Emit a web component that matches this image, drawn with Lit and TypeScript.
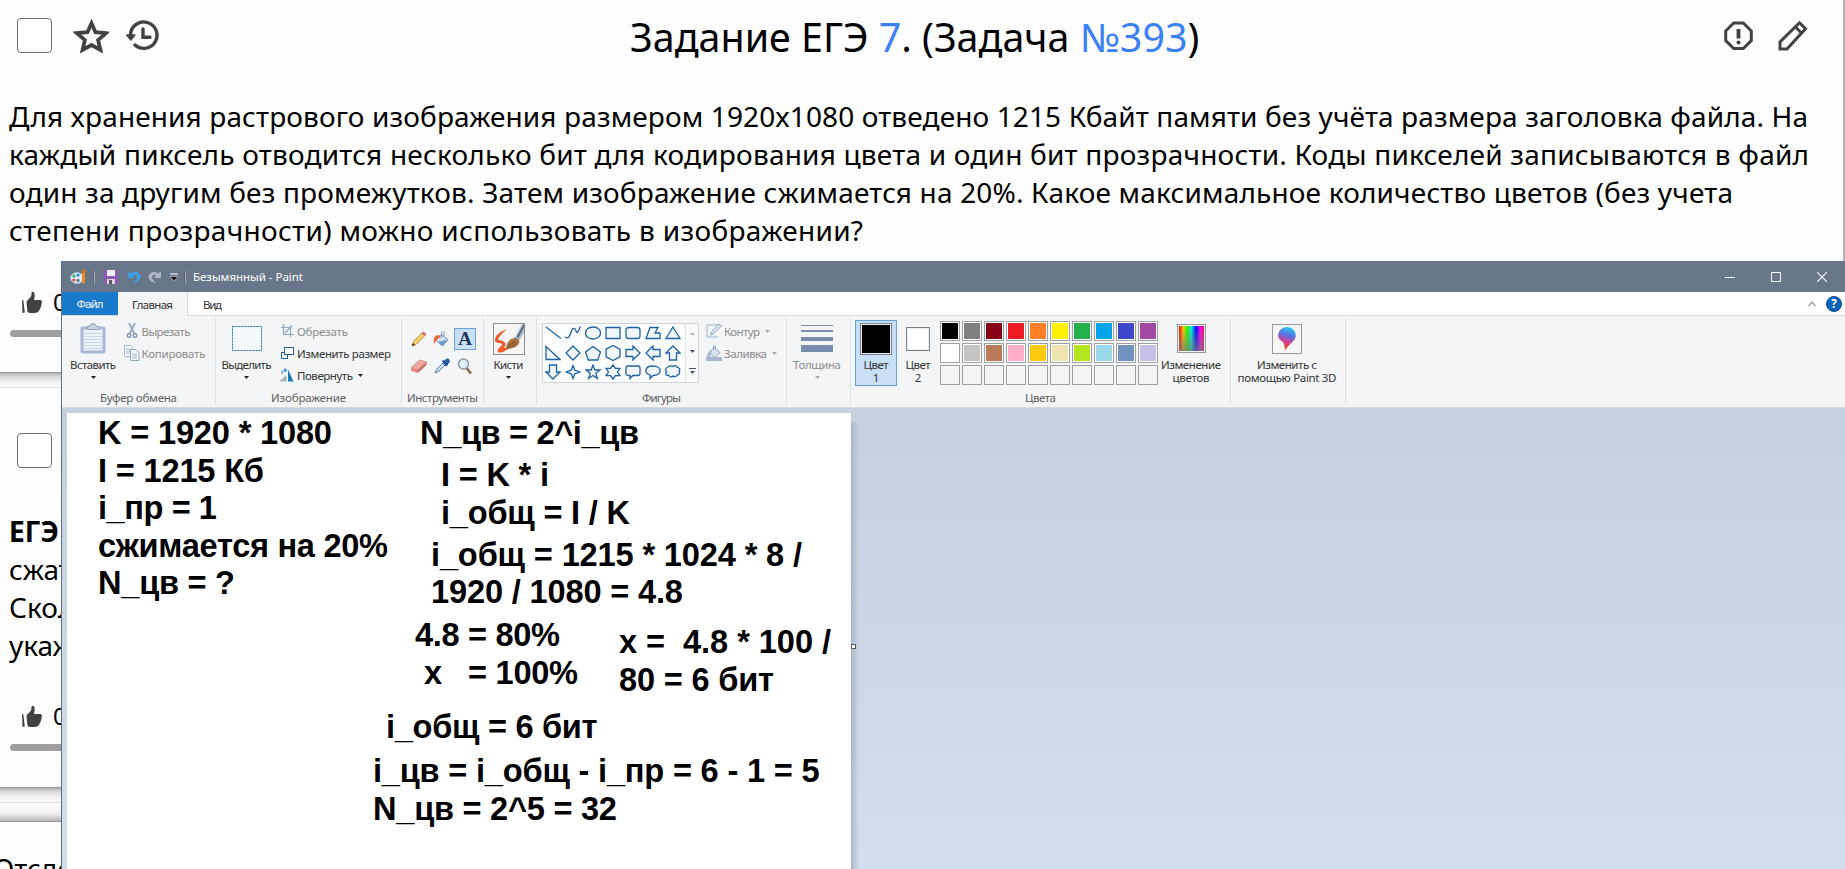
import { LitElement, html, svg, css, nothing, TemplateResult } from "lit";
import { customElement, property } from "lit/decorators.js";
import { classMap } from "lit/directives/class-map.js";
import { styleMap } from "lit/directives/style-map.js";

/** A run of text whose tracking is adjusted so that it spans a given width. */
@customElement("fit-text")
class FitText extends LitElement {
  @property() text = "";
  @property({ type: Number }) w = 0;
  static styles = css`
    :host { display: inline-block; white-space: pre; }
  `;
  updated() {
    this.style.letterSpacing = "0px";
    const natural = this.getBoundingClientRect().width;
    const n = Math.max(1, this.text.length - 1);
    if (this.w) {
      const s = (this.w - natural) / n;
      this.style.letterSpacing = `${s}px`;
      this.style.marginRight = `${-s}px`;
    }
  }
  render() {
    return html`${this.text}`;
  }
}

const fit = (text: string, w: number) => html`<fit-text .text=${text} .w=${w}></fit-text>`;
const icon = (w: number, h: number, body: TemplateResult | TemplateResult[]) =>
  html`<svg width=${w} height=${h} viewBox="0 0 ${w} ${h}" fill="none">${body}</svg>`;
const arrow = (color = "#222") => icon(5, 3, svg`<path d="M0 0h5L2.500 3z" fill=${color}/>`);

const starIcon = icon(36, 34, svg`<path d="M18.500 4.200l4 9 10.600 .9-8 7 2.300 9.800L18.500 26l-8.900 4.900 2.300-9.800-8-7 10.600-.9z" stroke="#424242" stroke-width="3.800"/>`);
const historyIcon = icon(34, 32, svg`
  <path d="M4.600 15.500A13.200 13.200 0 1 1 9 25" stroke="#424242" stroke-width="3.400" stroke-linecap="round"/>
  <path d="M.8 15h8l-4 5z" fill="#424242" stroke="#424242" stroke-width="1.500" stroke-linejoin="round"/>
  <path d="M17 9v8.300h7" stroke="#424242" stroke-width="3.400" stroke-linecap="round"/>`);
const reportIcon = icon(30, 30, svg`
  <path d="M9.700 2h9.600l8 8v9.600l-8 8H9.700l-8-8V10z" stroke="#424242" stroke-width="3"/>
  <path d="M14.500 8v9.500" stroke="#424242" stroke-width="3.800"/><circle cx="14.500" cy="21.500" r="2" fill="#424242"/>`);
const pencilIcon = icon(30, 30, svg`
  <path d="M2 28v-7L21.500 1.800l6 6L9 28z" stroke="#424242" stroke-width="3"/>
  <path d="M17.500 6l6 6" stroke="#424242" stroke-width="2.800"/>`);
const thumbIcon = icon(22, 23, svg`
  <path d="M1 9.500l1.200-.8 1.600 12.800-2.300.5z" fill="#424242"/>
  <path d="M5.500 11c0-1.200 4-4.200 4.800-6.200.4-1.500-.3-3.800 1.400-4 2.400 0 2.300 4 1.300 8.200h6c1.600 0 2.100 1 1.900 2.500-.4 3.500-1.800 6.800-3.400 9-1 1-2 1.400-4 1.400H9c-1.600 0-2.500-.8-2.700-2.200z" fill="#424242"/>`);

const paintIcon = icon(17, 17, svg`
  <ellipse cx="7" cy="10" rx="6.500" ry="5.500" fill="#dcebf5" stroke="#9fc3dc" stroke-width=".8"/>
  <circle cx="4" cy="8" r="1.600" fill="#3aa95a"/><circle cx="8" cy="7" r="1.600" fill="#3f83d6"/>
  <circle cx="3.800" cy="12" r="1.600" fill="#d84b3a"/><circle cx="8" cy="12.500" r="1.700" fill="#68788c"/>
  <path d="M12 5l1.500-4L15 5v10.500h-3z" fill="#ef8b27"/><path d="M11.500 1.500h4V5h-4z" fill="#c4762c"/>`);
const saveIcon = icon(14, 14, svg`
  <path d="M0 0h14v14H2l-2-2z" fill="#8c5bb0"/><path d="M3 0h8v6H3z" fill="#f3eff7"/><path d="M3 9h8v5H3z" fill="#d9d4df"/><path d="M5 10h3v4H5z" fill="#5b5560"/>`);
const undoIcon = (c: string) => icon(14, 14, svg`
  <path d="M1 1v7h7.200L5.700 5.600C8 4.300 10 5.200 9.900 7.500 9.800 9.500 8.300 11 5.500 13.200 10.500 12.500 13.600 10 13.500 6.700 13.300 2.300 8 .3 3.600 3.400z" fill=${c}/>`);

const clipboardIcon = icon(26, 31, svg`
  <rect x=".5" y="3.500" width="25" height="27" rx="2" fill="#a9b8d2"/><rect x="3.500" y="6.500" width="19" height="21" fill="#edf3fa"/>
  <path d="M3.500 10.500h19M3.500 13.500h19M3.500 16.500h19M3.500 19.500h19M3.500 22.500h19M3.500 25.500h19" stroke="#c5d6ea"/>
  <path d="M7 6.500V4l3-1c0-3 6-3 6 0l3 1v2.500z" fill="#c9d2df" stroke="#909fb6"/>`);
const cutIcon = icon(16, 16, svg`
  <path d="M5 0l5.500 11M11 0L5.500 11" stroke="#9cadc7" stroke-width="2"/>
  <circle cx="5" cy="12.500" r="1.800" stroke="#8498b8" stroke-width="1.400"/><circle cx="11" cy="12.500" r="1.800" stroke="#8498b8" stroke-width="1.400"/>`);
const copyIcon = icon(16, 16, svg`
  <path d="M.5.500h6l3 3v8h-9z" fill="#f3f7fc" stroke="#a7b7d0"/><path d="M2 4h4M2 6h4M2 8h4" stroke="#a7b7d0"/>
  <path d="M6.500 4.500h5.500l3 3v8H6.500z" fill="#f3f7fc" stroke="#93a6c4"/><path d="M8 9h5M8 11h5M8 13h5" stroke="#a7b7d0"/>`);
const selectIcon = icon(30, 25, svg`<rect x=".5" y=".5" width="29" height="24" fill="#f4f9fd" stroke="#1c6cb0" stroke-dasharray="2 1"/>`);
const cropIcon = icon(14, 14, svg`<path d="M3.500 0v10.500H14M1 3.500h9.500V13M5 9l7-7.500" stroke="#8fa3c3" stroke-width="1.200"/>`);
const resizeIcon = icon(14, 14, svg`
  <rect x="1.500" y="6.500" width="6" height="6" fill="#fff" stroke="#1f62a3"/><rect x="4.500" y="1.500" width="9" height="7" fill="#fff" stroke="#1f62a3"/>`);
const rotateIcon = icon(16, 14, svg`
  <path d="M0 13.500L7.500 7v6.500z" fill="#a9b3be"/><path d="M9 1.500l5.500 12H9z" fill="#1f78b8"/><path d="M3 6c0-3 1.500-4 4-4M5.500.500L7.500 2l-2 2" stroke="#3a90d8" stroke-width="1.200"/>`);

const toolPencil = icon(16, 16, svg`<path d="M1 15l1.500-4.500L11.500 1.500 14.500 4 5 13.500z" fill="#f3d565" stroke="#a8752c" stroke-width=".8"/><path d="M10.500 2.500l2-2 3 2.500-2 2z" fill="#d9757a"/><path d="M1 15l1-3 2 2z" fill="#333"/>`);
const toolBucket = icon(18, 16, svg`<path d="M8 3.500l7 5-5.500 6.500-6.500-6z" fill="#d7e5f2" stroke="#7693b4"/><path d="M9 10l6-1.500-5.500 6.500-5-4z" fill="#6f9cc8"/><path d="M8.500 7V2c0-2 2.500-2 2.500 0v3" stroke="#8a99a8"/><path d="M6 4C2 4 0 7 1 13l2.500-4L7.500 6z" fill="#e8663c"/>`);
const toolEraser = icon(18, 14, svg`<path d="M1 9l8.500-8 7 2-8.500 8z" fill="#f0a9a2" stroke="#c97d77" stroke-width=".8"/><path d="M1 9l7 2v3l-6.500-2z" fill="#e3857f"/><path d="M8 11l8.500-8v3L8 14z" fill="#c96d68"/>`);
const toolPicker = icon(16, 16, svg`<path d="M8.500 2.500l5 5M9.500 5.500l3-3.500c1-1.200 3 .5 2 2l-3 3z" stroke="#1f5796" stroke-width="2" fill="#2f72b8"/><path d="M9 5L2.500 11.500 1 15l3.500-1.500L11 7z" fill="#cfe2f2" stroke="#4d7296" stroke-width=".9"/>`);
const toolZoom = icon(16, 17, svg`<path d="M9.500 10l4.500 5.500" stroke="#8d6a4c" stroke-width="2.600"/><circle cx="6.500" cy="6" r="5" fill="#e0effa" stroke="#8e9aa6" stroke-width="1.500"/>`);
const brushIcon = icon(32, 32, svg`
  <rect x=".5" y=".5" width="31" height="31" fill="#f7f6f5" stroke="#8f8f8f"/>
  <path d="M14 6.500C7 8 1.500 13 2 18c1.500 2.500 5 1.500 7 3 1 1.500-4 4-4.500 6.500 0 2.500 3.500 2.500 5.500 1.500l6-3.500-5-1c2-2 2-5-1-6.500-2-1-4.500-.5-5-1.500 1-3 4-6.500 9-10z" fill="#f0592a"/>
  <path d="M21 15L28.500 1H31v8.500L26 18z" fill="#aebdcd"/><path d="M24.500 14.500L31 2" stroke="#596b80" stroke-width="1.800"/><path d="M22 14L28.500 1.500" stroke="#e6edf3"/>
  <path d="M13 26c0-7 5-11.500 10-11 4 1.500 4 5 2 7-3 3-7 4-12 4z" fill="#a8733d"/><path d="M15 24l7-6M18 24l5-4" stroke="#6b4523"/>`);

// Shape gallery, each drawn in a 16×16 box.
const SHAPES: string[] = [
  "M1 2l15 11.500", "M0 12c4 3 5-2 6.500-6s4-3 4.500 0 2.500 1 4.500-4.500", "M8 2c10 0 10 12 0 12S-2 2 8 2z",
  "M1 2.500h14v11H1z", "M3.500 2.500h9a2.500 2.500 0 0 1 2.500 2.500v6a2.500 2.500 0 0 1-2.500 2.500h-9A2.500 2.500 0 0 1 1 11V5a2.500 2.500 0 0 1 2.500-2.500z",
  "M5 2.500h8l-3 5.500h5v5.500H1z", "M8 2l7 11.500H1z",
  "M1 1.500l14 13H1z", "M8 1l7 7-7 7-7-7z", "M8 1.500l7.500 5.500-2.800 8H3.300L.5 7z", "M8 .5l7 3.700v7.600l-7 3.700-7-3.700V4.200z",
  "M1 4.500h7V1l7 7-7 7v-3.500H1z", "M15 4.500H8V1L1 8l7 7v-3.500h7z", "M8 1l7 7h-3.500v7h-7V8H1z",
  "M8 15l7-7h-3.500V1h-7v7H1z", "M8 1.500l1.800 4.700L15 8l-5.200 1.800L8 14.500l-1.800-4.700L1 8l5.200-1.800z",
  "M8 1l1.800 5h5.200l-4.200 3.300 1.600 5.200L8 11.500l-4.400 3 1.600-5.200L1 6h5.200z",
  "M8 .8l2.300 3.600H15L12.500 8l2.500 3.600h-4.700L8 15.200l-2.300-3.600H1L3.500 8 1 4.400h4.700z",
  "M3 2h10a2 2 0 0 1 2 2v5.500a2 2 0 0 1-2 2H8l-3 3v-3H3a2 2 0 0 1-2-2V4a2 2 0 0 1 2-2z",
  "M8 2c9.500 0 9.500 9.500 0 9.500L5 14.500l.2-3.400C-1 9.500-1 2 8 2z",
  "M4 2.500c2-1.500 3 0 4 0 1.500-1.500 3.500-1 4 .8 2.500 0 3.500 2 2.200 3.700 1 2-.2 4-2 4-1 2-3 2-4 1-1.500 1.500-4 1-4.400-.7C1 12 0 9.500 1.500 8 0 6 .5 3.500 4 2.500z",
];
const shapeIcon = (d: string) => icon(16, 16, svg`<path d=${d} fill="#f0f7fb" stroke="#1f62a3" stroke-width="1.300"/>`);
const outlineIcon = icon(16, 16, svg`<path d="M12 2H1v12h11" stroke="#9fb0cc"/><path d="M4.500 12L6 8.500 13 1l2.500 2L8 10.500z" fill="#dbe3ee" stroke="#8fa3c3"/>`);
const fillIcon = icon(16, 16, svg`<path d="M0 12h16v4H0z" fill="#a9b8d2"/><path d="M8 2.500l6 5-5 5-6-5z" fill="#dbe3ee" stroke="#8fa3c3"/><path d="M1 12c0-4 2-6 5-7l-2 7z" fill="#a9b8d2"/><path d="M7.500 5V1.500c0-1.500 2-1.500 2 0V4" stroke="#8fa3c3"/>`);
const widthIcon = icon(32, 28, svg`<path d="M0 0h32v1H0zM0 5h32v2H0zM0 12h32v4H0zM0 20h32v7H0z" fill="#7a8cb0"/>`);
const spectrumIcon = html`<span class="spectrum"><i></i></span>`;
const balloonIcon = html`<span class="framed"><svg width="20" height="26" viewBox="0 0 20 26">
  <defs><linearGradient id="b" x1=".6" y1="0" x2=".35" y2="1">
    <stop offset="0" stop-color="#25c9f2"/><stop offset=".35" stop-color="#5b6fe0"/><stop offset=".6" stop-color="#d0449a"/><stop offset=".82" stop-color="#e8403c"/><stop offset="1" stop-color="#fbb32b"/>
  </linearGradient></defs>
  <path d="M10 1c5 0 8.800 3.700 8.800 8.500 0 6-6.800 7.500-10.800 15.500-.8-3 .2-6-1.800-8.500C4 14.500 1.200 13 1.200 9.500 1.200 4.700 5 1 10 1z" fill="url(#b)"/></svg></span>`;

const PALETTE: string[] = [
  "#000000", "#7f7f7f", "#880015", "#ed1c24", "#ff7f27", "#fff200", "#22b14c", "#00a2e8", "#3f48cc", "#a349a4",
  "#ffffff", "#c3c3c3", "#b97a57", "#ffaec9", "#ffc90e", "#efe4b0", "#b5e61d", "#99d9ea", "#7092be", "#c8bfe7",
  ...Array(10).fill(""),
];

interface Note { x: number; y: number; lines: [string, number, number?][]; }
/** Text typed on the canvas: baseline of the first line, then [text, width, indent]. */
const NOTES: Note[] = [
  { x: 31, y: 31, lines: [["K = 1920 * 1080", 234], ["I = 1215 Кб", 166], ["i_пр = 1", 119], ["сжимается на 20%", 290], ["N_цв = ?", 137]] },
  { x: 353, y: 30.500, lines: [["N_цв = 2^i_цв", 219]] },
  { x: 374, y: 73, lines: [["I = K * i", 108], ["i_общ = I / K", 189]] },
  { x: 364, y: 152.500, lines: [["i_общ = 1215 * 1024 * 8 /", 371], ["1920 / 1080 = 4.8", 252]] },
  { x: 348, y: 233, lines: [["4.8 = 80%", 145], ["x   = 100%", 154, 9]] },
  { x: 552, y: 240, lines: [["x =  4.8 * 100 /", 212], ["80 = 6 бит", 155]] },
  { x: 319, y: 325, lines: [["i_общ = 6 бит", 211.500]] },
  { x: 306, y: 369, lines: [["i_цв = i_общ - i_пр = 6 - 1 = 5", 446.500], ["N_цв = 2^5 = 32", 244]] },
];

@customElement("paint-window")
class PaintWindow extends LitElement {
  static styles = css`
    * { box-sizing: border-box; }
    :host { display: flex; flex-direction: column; background: #c6d0e1; border-left: 1px solid #5f6d80;
      font: 11.5px/13px "Noto Sans", "Open Sans", sans-serif; color: #333; overflow: hidden; }
    svg { display: block; flex: none; }
    .title { display: flex; align-items: center; height: 31px; flex: none; background: #687689; color: #fff; padding-left: 8px; }
    .title .sep { width: 2px; height: 12px; background: #566274; border-right: 1px solid #a5b0bd; }
    .paint { margin-right: 6px; } .save { margin: 0 9px 0 10px; } .redo { transform: scaleX(-1); margin: 0 8px 0 7px; }
    .drop { margin-right: 6px; } .name { margin-left: 7px; }
    .title .save { margin-left: 9px; }
    .controls { margin-left: auto; display: flex; gap: 36px; padding-right: 18px; }
    .tabs { display: flex; height: 24px; flex: none; background: #fff; border-bottom: 1px solid #dadbdc; }
    .tab { height: 24px; display: flex; align-items: center; justify-content: center; padding-bottom: 0; }
    .tab.file { width: 56px; height: 23px; background: #1979ca; color: #fff; }
    .tab.main { width: 70px; background: #f4f5f7; border: 1px solid #dadbdc; border-width: 0 1px 0 0; }
    .tab.view { width: 49px; }
    .help { margin-left: auto; display: flex; align-items: center; gap: 10px; padding-right: 3px; }
    .q { width: 16px; height: 16px; border-radius: 50%; background: #0b63bd; border: 1px solid #084c92; color: #fff; font-weight: 700; text-align: center; line-height: 14px; }
    .ribbon { display: flex; height: 92px; flex: none; background: #f4f5f7; border-bottom: 1px solid #d5d8dc; padding: 2px 0 3px; }
    .group { display: flex; flex-direction: column; border-right: 1px solid #dfe0e3; padding-top: 2px; }
    .body { display: flex; height: 71px; align-items: flex-start; }
    .label { text-align: center; color: #606060; height: 13px; }
    .big { display: flex; flex-direction: column; align-items: center; flex: none; }
    .big .pic { height: 38px; display: flex; align-items: center; padding-bottom: 1px; }
    .big .second { height: 13px; display: flex; align-items: center; }
    .off { color: #8c8c8c; }
    .rows { display: flex; flex-direction: column; }
    .row { display: flex; height: 22px; align-items: center; }
    .row .ic { width: 20px; display: flex; justify-content: center; flex: none; }
    .row .ar { margin-left: 5px; }
    .clip { margin-left: 3.5px; width: 55px; }
    .clip + .rows { margin-left: 1px; }
    .clipboard { width: 154px; } .image { width: 186px; } .tools { width: 82px; } .brushes { width: 53px; }
    .shapes { width: 250px; } .thick { width: 64px; } .colors { width: 380px; } .p3d { width: 115px; }
    .image .big { width: 61px; } .brushes .big, .thick .big { width: 100%; } .brushes .big { padding-right: 3px; } .thick .big { padding-right: 3px; }
    .toolgrid { display: grid; grid-template-columns: repeat(3, 22px); grid-auto-rows: 22px; gap: 5px 1px; padding: 8px 0 0 6px; }
    .tool { display: flex; align-items: center; justify-content: center; }
    .tool.on { background: #c9dff6; border: 1px solid #6aa2e0; }
    .a { font: 700 19px/20px "Liberation Serif", serif; color: #1f3656; }
    .gallery { display: flex; width: 157px; height: 60px; margin: 3px 5px 0 5px; border: 1px solid #d3d5d8; background: #fcfdfe; }
    .grid { display: grid; grid-template-columns: repeat(7, 20px); grid-auto-rows: 19.5px; width: 142px; }
    .grid svg { margin: 1px 2px; }
    .scroll { flex: 1; border-left: 1px solid #dfe1e4; background: #f8f9fb; display: flex; flex-direction: column; justify-content: space-around; align-items: center; }
    .c1, .c2 { height: 66px; width: 42px; }
    .c1 { margin-left: 4px; background: #c9dff6; outline: 1px solid #65a0e0; outline-offset: -1px; }
    .c2 { margin-right: 1px; }
    .sw { width: 32px; height: 32px; border: 1px solid #7b7f86; padding: 1px; background: #e8f1fa; display: flex; }
    .sw i { flex: 1; background: #000; }
    .sw.two { width: 24px; height: 24px; } .sw.two i { background: #fff; }
    .palette { display: grid; grid-template-columns: repeat(10, 20px); grid-auto-rows: 20px; gap: 2px; margin: 1px 0 0; }
    .cell { border: 1px solid #a0a0a0; padding: 1px; background: #fff; }
    .cell.empty { background: #f4f5f7; }
    .cell i { display: block; height: 16px; }
    .edit { width: 66px; }
    .spectrum, .framed { display: flex; width: 30px; height: 30px; border: 1px solid #9a9a9a; background: #f8f6f5; padding: 1px; justify-content: center; }
    .spectrum { width: 29px; height: 29px; }
    .spectrum i { flex: 1; background: linear-gradient(transparent, rgba(120,120,120,.75)), linear-gradient(90deg, #f00, #fc0 18%, #2f0 33%, #0ee 50%, #00f 68%, #f0f 86%, #f04); }
    .p3d .big { width: 112px; }
    .work { flex: 1; background: linear-gradient(#c5cfe0, #d3ddeb); padding: 5px 0 0 5px; display: flex; min-height: 0; }
    .canvas { position: relative; width: 784px; background: #fff; font: 700 32.600px/37.500px "Liberation Sans", Arial, sans-serif; color: #000; flex: none; }
    .shade { width: 8px; margin-top: 9px; background: linear-gradient(90deg, #a9b6cb, rgba(190,202,220,0)); }
    .note { position: absolute; display: flex; flex-direction: column; align-items: flex-start; }
    .handle { position: absolute; left: 784px; top: 231px; width: 5px; height: 5px; background: #fff; border: 1px solid #555; }
  `;

  private row(ic: unknown, text: string, w: number, off = false, arr = false) {
    return html`<div class=${classMap({ row: true, off })}><span class="ic">${ic}</span>${fit(text, w)}${arr ? html`<span class="ar">${arrow(off ? "#a8a8a8" : "#222")}</span>` : nothing}</div>`;
  }
  private big(cls: string, pic: unknown, t: string, w: number, second: unknown) {
    return html`<div class="big ${cls}"><div class="pic">${pic}</div>${fit(t, w)}<div class="second">${second}</div></div>`;
  }
  private group(cls: string, body: unknown, label = "", w = 0) {
    return html`<div class="group ${cls}"><div class="body">${body}</div><div class="label">${label ? fit(label, w) : nothing}</div></div>`;
  }

  render() {
    return html`
      <div class="title">
        <span class="paint">${paintIcon}</span><span class="sep"></span>
        <span class="save">${saveIcon}</span>${undoIcon("#3f9fe0")}
        <span class="redo">${undoIcon("#a9b6c6")}</span>
        <span class="drop">${icon(8, 8, svg`<path d="M0 1h8" stroke="#fff"/><path d="M0 3.500h8L4 8z" fill="#111" stroke="#fff" stroke-width=".5"/>`)}</span>
        <span class="sep"></span><span class="name">${fit("Безымянный - Paint", 110)}</span>
        <div class="controls">
          ${icon(10, 10, svg`<path d="M0 5.500h10" stroke="#fff"/>`)}
          ${icon(10, 10, svg`<path d="M.5.500h9v9h-9z" stroke="#fff"/>`)}
          ${icon(10, 10, svg`<path d="M0 0l10 10M10 0L0 10" stroke="#fff" stroke-width="1.100"/>`)}
        </div>
      </div>
      <div class="tabs">
        <div class="tab file">${fit("Файл", 27)}</div>
        <div class="tab main">${fit("Главная", 41)}</div>
        <div class="tab view">${fit("Вид", 19)}</div>
        <div class="help">${icon(8, 6, svg`<path d="M.5 5l3.500-4 3.500 4" stroke="#9a9a9a" stroke-width="1.200"/>`)}<span class="q">?</span></div>
      </div>
      <div class="ribbon">
        ${this.group("clipboard", html`
          ${this.big("clip", clipboardIcon, "Вставить", 46, arrow())}
          <div class="rows">${this.row(cutIcon, "Вырезать", 49, true)}${this.row(copyIcon, "Копировать", 64, true)}</div>`, "Буфер обмена", 77)}
        ${this.group("image", html`
          ${this.big("", selectIcon, "Выделить", 50, arrow())}
          <div class="rows">${this.row(cropIcon, "Обрезать", 51, true)}${this.row(resizeIcon, "Изменить размер", 94)}${this.row(rotateIcon, "Повернуть", 56, false, true)}</div>`, "Изображение", 75)}
        ${this.group("tools", html`<div class="toolgrid">
          <span class="tool">${toolPencil}</span><span class="tool">${toolBucket}</span><span class="tool on"><span class="a">A</span></span>
          <span class="tool">${toolEraser}</span><span class="tool">${toolPicker}</span><span class="tool">${toolZoom}</span></div>`, "Инструменты", 71)}
        ${this.group("brushes", this.big("", brushIcon, "Кисти", 30, arrow()))}
        ${this.group("shapes", html`
          <div class="gallery"><div class="grid">${SHAPES.map(shapeIcon)}</div>
            <div class="scroll">${icon(5, 3, svg`<path d="M0 3h5L2.500 0z" fill="#b0b5bd"/>`)}${arrow("#43536e")}${icon(7, 6, svg`<path d="M0 .5h7" stroke="#43536e"/><path d="M1 3h5L3.500 6z" fill="#43536e"/>`)}</div></div>
          <div class="rows">${this.row(outlineIcon, "Контур", 36, true, true)}${this.row(fillIcon, "Заливка", 43, true, true)}</div>`, "Фигуры", 39)}
        ${this.group("thick", this.big("off", widthIcon, "Толщина", 48, arrow("#a8a8a8")))}
        ${this.group("colors", html`
          ${this.big("c1", html`<span class="sw"><i></i></span>`, "Цвет", 25, "1")}
          ${this.big("c2", html`<span class="sw two"><i></i></span>`, "Цвет", 25, "2")}
          <div class="palette">${PALETTE.map((c) => html`<span class=${classMap({ cell: true, empty: !c })}>${c ? html`<i style=${styleMap({ background: c })}></i>` : nothing}</span>`)}</div>
          ${this.big("edit", spectrumIcon, "Изменение", 60, fit("цветов", 37))}`, "Цвета", 31)}
        ${this.group("p3d", this.big("", balloonIcon, "Изменить с", 60, fit("помощью Paint 3D", 99)))}
      </div>
      <div class="work">
        <div class="canvas">
          ${NOTES.map((n) => html`<div class="note" style=${styleMap({ left: `${n.x}px`, top: `${n.y - 30}px` })}>
            ${n.lines.map(([t, w, dx]) => html`<span style=${styleMap({ paddingLeft: `${dx ?? 0}px` })}>${fit(t, w)}</span>`)}</div>`)}
          <i class="handle"></i>
        </div>
        <div class="shade"></div>
      </div>`;
  }
}

@customElement("app-root")
class AppRoot extends LitElement {
  static styles = css`
    * { box-sizing: border-box; }
    :host { display: block; position: relative; width: 1845px; height: 869px; overflow: hidden; background: #fdfdfd;
      font: 28px/38px "Noto Sans", sans-serif; color: #000; }
    svg { display: block; flex: none; }
    .edge { border-right: 2px solid #b5b5b5; height: 372px; }
    .head { display: flex; align-items: center; height: 97px; padding: 0 35px 26px 17px; }
    .check { display: block; width: 35px; height: 35px; border: 1px solid #6e6e6e; border-radius: 4px; background: #fff; flex: none; }
    .star { margin-left: 21px; } .hist { margin-left: 17px; }
    .caption { font-size: 39.4px; line-height: 54px; margin-left: 470px; white-space: pre; padding-top: 3px; }
    .caption b { font-weight: 400; color: #3a80f6; }
    .right { margin-left: auto; display: flex; gap: 24px; }
    .para { padding-left: 9px; display: flex; flex-direction: column; align-items: flex-start; }
    .vote { display: flex; align-items: center; font-size: 24px; padding-left: 21px; gap: 10px; height: 36px; }
    .first { margin-top: 35px; }
    .bar { height: 7px; border-radius: 4px 0 0 4px; background: #9e9e9e; margin: 10px 0 0 10px; width: 60px; }
    .gap { height: 16px; background: linear-gradient(#b2b2b2, #d8d8d8 25%, #f0f0f0 60%, #fafafa); border-bottom: 1px solid #dcdcdc; border-top: 1px solid #999; }
    .next { height: 399px; padding-top: 45px; }
    .text { padding: 44px 0 0 9px; height: 207px; white-space: nowrap; }
    .vote.second { margin-top: 23px; }
    .thin { height: 19px; background: linear-gradient(#fdfdfd 15%, #eee 60%, #b5b5b5); border-bottom: 1px solid #999; }
    .next .check { margin-left: 17px; }
    .last { padding-top: 27px; white-space: nowrap; margin-left: -7px; }
    paint-window { position: absolute; left: 61px; top: 261px; right: 0; bottom: 0; }
  `;
  render() {
    return html`
      <section class="edge">
        <header class="head">
          <span class="check"></span><span class="star">${starIcon}</span><span class="hist">${historyIcon}</span>
          <div class="caption">Задание ЕГЭ <b>7</b>. (Задача <b>№393</b>)</div>
          <div class="right">${reportIcon}${pencilIcon}</div>
        </header>
        <div class="para">
          ${fit("Для хранения растрового изображения размером 1920х1080 отведено 1215 Кбайт памяти без учёта размера заголовка файла. На", 1799)}
          ${fit("каждый пиксель отводится несколько бит для кодирования цвета и один бит прозрачности. Коды пикселей записываются в файл", 1800)}
          ${fit("один за другим без промежутков. Затем изображение сжимается на 20%. Какое максимальное количество цветов (без учета", 1724)}
          ${fit("степени прозрачности) можно использовать в изображении?", 854)}
        </div>
        <div class="vote first">${thumbIcon}<span>0</span></div>
        <div class="bar"></div>
      </section>
      <div class="gap"></div>
      <section class="next">
        <span class="check"></span>
        <div class="text"><strong>ЕГЭ</strong><br>сжат<br>Скол<br>укаж</div>
        <div class="vote second">${thumbIcon}<span>0</span></div>
        <div class="bar"></div>
      </section>
      <div class="gap"></div>
      <div class="thin"></div>
      <div class="last">Отсле</div>
      <paint-window></paint-window>`;
  }
}
